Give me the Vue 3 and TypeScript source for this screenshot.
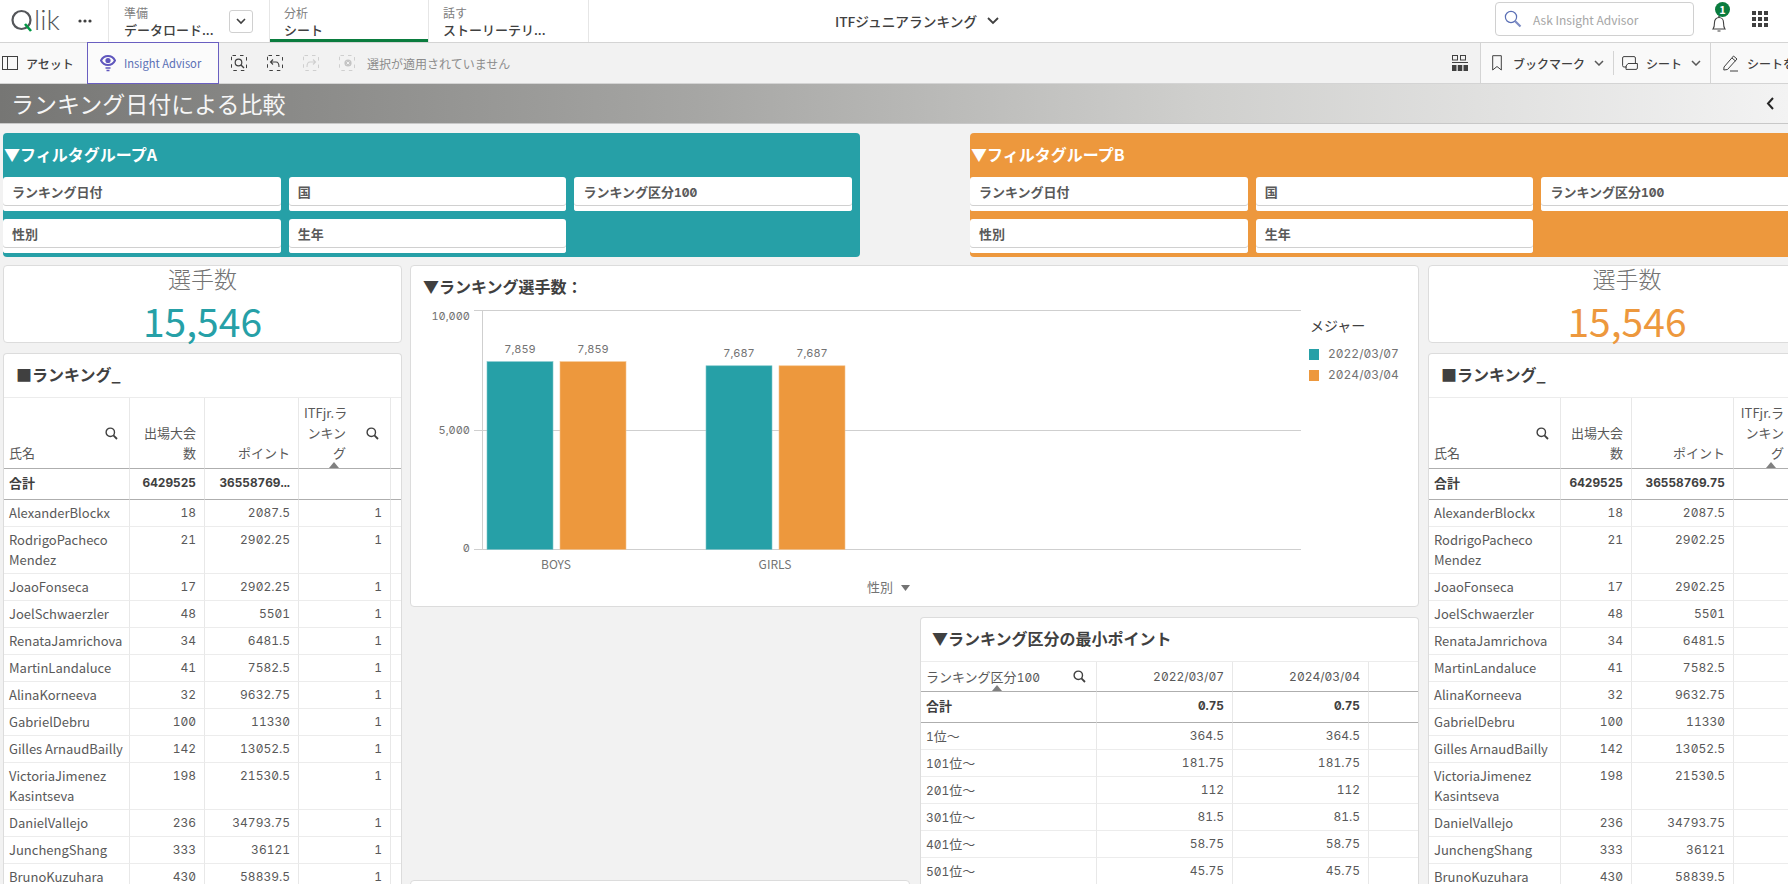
<script setup lang="ts">
interface Row { name: string; nameBreak?: string; events: number; points: string }
const rows: Row[] = [
  { name: 'AlexanderBlockx', events: 18, points: '2087.5' },
  { name: 'RodrigoPacheco', nameBreak: 'Mendez', events: 21, points: '2902.25' },
  { name: 'JoaoFonseca', events: 17, points: '2902.25' },
  { name: 'JoelSchwaerzler', events: 48, points: '5501' },
  { name: 'RenataJamrichova', events: 34, points: '6481.5' },
  { name: 'MartinLandaluce', events: 41, points: '7582.5' },
  { name: 'AlinaKorneeva', events: 32, points: '9632.75' },
  { name: 'GabrielDebru', events: 100, points: '11330' },
  { name: 'Gilles ArnaudBailly', events: 142, points: '13052.5' },
  { name: 'VictoriaJimenez', nameBreak: 'Kasintseva', events: 198, points: '21530.5' },
  { name: 'DanielVallejo', events: 236, points: '34793.75' },
  { name: 'JunchengShang', events: 333, points: '36121' },
  { name: 'BrunoKuzuhara', events: 430, points: '58839.5' },
]
const sides = [
  { key: 'a', color: '#26a0a7', label: 'A', cols: [126, 75, 94, 92, 10], total: '36558769...' },
  { key: 'b', color: '#ed983d', label: 'B', cols: [132, 71, 102, 95, 40], total: '36558769.75' },
]
const filters = [
  { text: 'ランキング日付', num: '' }, { text: '国', num: '' }, { text: 'ランキング区分', num: '100' },
  { text: '性別', num: '' }, { text: '生年', num: '' },
]
const minCols = [176, 136, 136, 49]
const minRows = [
  ['1', '364.5'], ['101', '181.75'], ['201', '112'],
  ['301', '81.5'], ['401', '58.75'], ['501', '45.75'],
]
const sum = (a: number[]) => a.reduce((x, y) => x + y, 0) + 'px'
const yTicks = [
  { label: '10,000', y: 7, line: 0.5 },
  { label: '5,000', y: 121, line: 120.5 },
  { label: '0', y: 239, line: 239.5 },
]
const barH = (v: number) => (239 * v) / 10000
const groups = [
  { name: 'BOYS', value: 7859, label: '7,859', x: 76, cx: 145 },
  { name: 'GIRLS', value: 7687, label: '7,687', x: 295, cx: 364 },
]
</script>

<template>
  <div class="app">
    <header class="topbar">
      <div class="top-left">
        <div class="logo-cell">
          <svg class="logo" width="54" height="36" viewBox="0 -5 54 36">
            <circle cx="11.5" cy="12" r="9" fill="none" stroke="#54565a" stroke-width="2.2" />
            <path d="M15 16 L21 23" stroke="#009845" stroke-width="2.6" fill="none" />
            <text x="24" y="21.5" class="logo-text">lik</text>
          </svg>
          <svg class="dots" width="14" height="4" viewBox="0 0 14 4">
            <circle cx="2" cy="2" r="1.6" fill="#404040" /><circle cx="7" cy="2" r="1.6" fill="#404040" /><circle cx="12" cy="2" r="1.6" fill="#404040" />
          </svg>
        </div>
        <div class="tab tab-prep">
          <div class="tab-text"><span class="tab-small">準備</span><span class="tab-main">データロード...</span></div>
          <button class="tab-btn">
            <svg width="10" height="7" viewBox="0 0 10 7"><path d="M1 1 L5 5 L9 1" fill="none" stroke="#404040" stroke-width="1.6" /></svg>
          </button>
        </div>
        <div class="tab tab-active">
          <div class="tab-text"><span class="tab-small">分析</span><span class="tab-main">シート</span></div>
        </div>
        <div class="tab">
          <div class="tab-text"><span class="tab-small">話す</span><span class="tab-main">ストーリーテリ...</span></div>
        </div>
      </div>
      <div class="app-title">
        <span>ITFジュニアランキング</span>
        <svg width="12" height="8" viewBox="0 0 12 8"><path d="M1 1 L6 6 L11 1" fill="none" stroke="#404040" stroke-width="1.8" /></svg>
      </div>
      <div class="top-right">
        <div class="ask">
          <svg width="18" height="18" viewBox="0 0 18 18">
            <circle cx="7" cy="7" r="5.6" fill="none" stroke="#5a6fb5" stroke-width="1.2" />
            <path d="M11.2 11.2 L16.5 16.5" stroke="#7d8cc4" stroke-width="2.2" />
          </svg>
          <span>Ask Insight Advisor</span>
        </div>
        <div class="bell">
          <svg width="16" height="18" viewBox="0 0 16 18">
            <path d="M2 14 C3.5 12 3.5 10 3.5 7.5 C3.5 4.5 5.5 2.5 8 2.5 C10.5 2.5 12.5 4.5 12.5 7.5 C12.5 10 12.5 12 14 14 Z" fill="none" stroke="#404040" stroke-width="1.1" />
            <path d="M6.5 15.5 H9.5 V16.5 H6.5 Z M7.3 1 H8.7 V2.5 H7.3 Z" fill="#404040" />
          </svg>
          <span class="badge">1</span>
        </div>
        <svg class="apps" width="16" height="16" viewBox="0 0 16 16" fill="#404040">
          <rect x="0" y="0" width="4" height="4" /><rect x="6" y="0" width="4" height="4" /><rect x="12" y="0" width="4" height="4" />
          <rect x="0" y="6" width="4" height="4" /><rect x="6" y="6" width="4" height="4" /><rect x="12" y="6" width="4" height="4" />
          <rect x="0" y="12" width="4" height="4" /><rect x="6" y="12" width="4" height="4" /><rect x="12" y="12" width="4" height="4" />
        </svg>
      </div>
    </header>

    <div class="toolbar">
      <div class="tool-left">
        <div class="assets">
          <svg width="16" height="14" viewBox="0 0 16 14"><rect x="0.5" y="0.5" width="15" height="13" fill="none" stroke="#404040" /><path d="M5.5 0.5 V13.5" stroke="#404040" /></svg>
          <span>アセット</span>
        </div>
        <div class="insight">
          <svg width="16" height="18" viewBox="0 0 16 18">
            <path d="M1 6.5 C4 0.5 12 0.5 15 6.5 C12 12.5 4 12.5 1 6.5 Z" fill="none" stroke="#5f56bd" stroke-width="2" />
            <circle cx="8" cy="6.5" r="2.6" fill="#5f56bd" />
            <path d="M5.5 14 H10.5 M6.5 16.5 H9.5" stroke="#5f56bd" stroke-width="1.6" />
          </svg>
          <span>Insight Advisor</span>
        </div>
        <div class="selections">
          <svg width="16" height="16" viewBox="0 0 16 16"><rect x="0.5" y="0.5" width="15" height="15" rx="1" fill="none" stroke="#404040" stroke-dasharray="3.5 4" /><circle cx="7.5" cy="7.5" r="3.3" fill="none" stroke="#404040" stroke-width="1.2" /><path d="M10 10 L13 13" stroke="#404040" stroke-width="1.4" /></svg>
          <svg width="16" height="16" viewBox="0 0 16 16"><rect x="0.5" y="0.5" width="15" height="15" rx="1" fill="none" stroke="#404040" stroke-dasharray="3.5 4" /><path d="M3.5 7 H9 C11 7 12 8.5 12 12 M6 4.5 L3.5 7 L6 9.5" fill="none" stroke="#404040" stroke-width="1.1" /></svg>
          <svg width="16" height="16" viewBox="0 0 16 16"><rect x="0.5" y="0.5" width="15" height="15" rx="1" fill="none" stroke="#cfcfcf" stroke-dasharray="3.5 4" /><path d="M12.5 7 H7 C5 7 4 8.5 4 12 M10 4.5 L12.5 7 L10 9.5" fill="none" stroke="#cfcfcf" stroke-width="1.1" /></svg>
          <svg width="16" height="16" viewBox="0 0 16 16"><rect x="0.5" y="0.5" width="15" height="15" rx="1" fill="none" stroke="#cfcfcf" stroke-dasharray="3.5 4" /><circle cx="9" cy="8" r="3.6" fill="#c4c4c4" /><path d="M7.6 6.6 L10.4 9.4 M10.4 6.6 L7.6 9.4" stroke="#f2f2f2" stroke-width="1" /></svg>
          <span>選択が適用されていません</span>
        </div>
        <svg class="grid-toggle" width="16" height="16" viewBox="0 0 16 16" fill="#404040">
          <rect x="0.5" y="0.5" width="5" height="4.5" fill="none" stroke="#404040" /><rect x="8.5" y="0.5" width="5" height="4.5" fill="none" stroke="#404040" />
          <rect x="0" y="7" width="16" height="1" />
          <rect x="0" y="10" width="4.5" height="6" /><rect x="5.75" y="10" width="4.5" height="6" /><rect x="11.5" y="10" width="4.5" height="6" />
        </svg>
      </div>
      <div class="tool-right">
        <div class="tool-item tool-bookmark">
          <svg width="10" height="16" viewBox="0 0 10 16"><path d="M0.7 0.7 H9.3 V15 L5 11.5 L0.7 15 Z" fill="none" stroke="#404040" stroke-width="1" /></svg>
          <span class="tool-label">ブックマーク</span>
          <svg width="10" height="6" viewBox="0 0 10 6"><path d="M1 1 L5 5 L9 1" fill="none" stroke="#595959" stroke-width="1.5" /></svg>
        </div>
        <div class="tool-item tool-sheet">
          <svg width="16" height="14" viewBox="0 0 16 14"><path d="M5 11 H2 Q0.6 11 0.6 9.6 V2 Q0.6 0.6 2 0.6 H12 Q13.4 0.6 13.4 2 V7.5 M4 13.4 Q2.8 10 6 7.5 H15.4 V12 Q15.4 13.4 14 13.4 Z" fill="none" stroke="#404040" stroke-width="1" /></svg>
          <span class="tool-label">シート</span>
          <svg width="10" height="6" viewBox="0 0 10 6"><path d="M1 1 L5 5 L9 1" fill="none" stroke="#595959" stroke-width="1.5" /></svg>
        </div>
        <div class="tool-item tool-edit">
          <svg width="16" height="18" viewBox="0 0 16 18"><path d="M1 13 L10.5 2 L14 5 L4.5 15.5 L0.8 16 Z M9 4 L12.5 7" fill="none" stroke="#404040" stroke-width="1" /><path d="M7 17 H15" stroke="#404040" stroke-width="1" /></svg>
          <span class="tool-label">シートを編集</span>
        </div>
      </div>
    </div>

    <div class="title-band">
      <h1>ランキング日付による比較</h1>
      <svg width="9" height="13" viewBox="0 0 9 13"><path d="M7 1 L2 6.5 L7 12" fill="none" stroke="#262626" stroke-width="2" /></svg>
    </div>

    <main class="sheet">
      <template v-for="s in sides" :key="s.key">
        <section :class="['filter-panel', 'filter-' + s.key]" :style="{ background: s.color }">
          <h2>▼フィルタグループ{{ s.label }}</h2>
          <div class="filter-grid">
            <div v-for="f in filters" :key="f.text" class="filter-box">{{ f.text }}<span v-if="f.num" class="num">{{ f.num }}</span></div>
          </div>
        </section>

        <section :class="['card', 'kpi', 'kpi-' + s.key]">
          <div class="kpi-title">選手数</div>
          <div class="kpi-value" :style="{ color: s.color }">15,546</div>
        </section>

        <section :class="['card', 'rank', 'rank-' + s.key]">
          <h3 class="card-title">■ランキング_</h3>
          <table class="tbl" :style="{ width: sum(s.cols) }">
            <colgroup><col v-for="(c, i) in s.cols" :key="i" :style="{ width: c + 'px' }" /></colgroup>
            <thead>
              <tr class="rank-head">
                <th class="left">
                  氏名
                  <svg class="search s-name" width="13" height="13" viewBox="0 0 13 13"><circle cx="5.3" cy="5.3" r="4.2" fill="none" stroke="#404040" stroke-width="1.4" /><path d="M8.4 8.4 L12 12" stroke="#404040" stroke-width="1.8" /></svg>
                </th>
                <th>出場大会<br />数</th>
                <th>ポイント</th>
                <th class="rank-col">
                  ITFjr.ラ<br />ンキン<br />グ
                  <svg class="search s-rank" width="13" height="13" viewBox="0 0 13 13"><circle cx="5.3" cy="5.3" r="4.2" fill="none" stroke="#404040" stroke-width="1.4" /><path d="M8.4 8.4 L12 12" stroke="#404040" stroke-width="1.8" /></svg>
                  <span class="sort"></span>
                </th>
                <th></th>
              </tr>
              <tr class="total">
                <td class="left">合計</td>
                <td class="num">6429525</td>
                <td class="num">{{ s.total }}</td>
                <td></td>
                <td></td>
              </tr>
            </thead>
            <tbody>
              <tr v-for="r in rows" :key="r.name">
                <td class="left">{{ r.name }}<template v-if="r.nameBreak"><br />{{ r.nameBreak }}</template></td>
                <td class="num">{{ r.events }}</td>
                <td class="num">{{ r.points }}</td>
                <td class="num">1</td>
                <td></td>
              </tr>
            </tbody>
          </table>
        </section>
      </template>

      <section class="card chart">
        <h3 class="card-title">▼ランキング選手数：</h3>
        <svg class="plot" width="1007" height="290" viewBox="0 0 1007 290">
          <g v-for="t in yTicks" :key="t.label">
            <line x1="63" :y1="t.line" x2="890" :y2="t.line" stroke="#cfcfcf" />
            <text x="59" :y="t.y" class="tick-num" text-anchor="end" dominant-baseline="middle">{{ t.label }}</text>
          </g>
          <line x1="71.5" y1="0" x2="71.5" y2="240" stroke="#cfcfcf" />
          <g v-for="g in groups" :key="g.name">
            <rect :x="g.x" :y="239.5 - barH(g.value)" width="66" :height="barH(g.value)" fill="#26a0a7" stroke="#7cc5ca" stroke-width="0.6" />
            <rect :x="g.x + 73" :y="239.5 - barH(g.value)" width="66" :height="barH(g.value)" fill="#ed983d" stroke="#f5c48e" stroke-width="0.6" />
            <text :x="g.x + 33" :y="239.5 - barH(g.value) - 12" class="tick-num" text-anchor="middle" dominant-baseline="middle">{{ g.label }}</text>
            <text :x="g.x + 106" :y="239.5 - barH(g.value) - 12" class="tick-num" text-anchor="middle" dominant-baseline="middle">{{ g.label }}</text>
            <text :x="g.cx" y="256" class="tick" text-anchor="middle" dominant-baseline="middle">{{ g.name }}</text>
          </g>
          <text x="456" y="278" class="axis-title" dominant-baseline="middle">性別</text>
          <path d="M490 275 H499 L494.5 281 Z" fill="#737373" />
          <text x="899" y="17" class="legend-title" dominant-baseline="middle">メジャー</text>
          <rect x="898" y="39" width="10" height="11" fill="#26a0a7" />
          <text x="917" y="45" class="legend-text" dominant-baseline="middle">2022/03/07</text>
          <rect x="898" y="60" width="10" height="11" fill="#ed983d" />
          <text x="917" y="66" class="legend-text" dominant-baseline="middle">2024/03/04</text>
        </svg>
      </section>

      <section class="card min-card">
        <h3 class="card-title">▼ランキング区分の最小ポイント</h3>
        <table class="tbl" :style="{ width: sum(minCols) }">
          <colgroup><col v-for="(c, i) in minCols" :key="i" :style="{ width: c + 'px' }" /></colgroup>
          <thead>
            <tr class="min-head">
              <th class="left">
                ランキング区分<span class="num">100</span>
                <svg class="search s-min" width="13" height="13" viewBox="0 0 13 13"><circle cx="5.3" cy="5.3" r="4.2" fill="none" stroke="#404040" stroke-width="1.4" /><path d="M8.4 8.4 L12 12" stroke="#404040" stroke-width="1.8" /></svg>
                <span class="sort sort-min"></span>
              </th>
              <th class="num">2022/03/07</th>
              <th class="num">2024/03/04</th>
              <th></th>
            </tr>
            <tr class="total">
              <td class="left">合計</td>
              <td class="num">0.75</td>
              <td class="num">0.75</td>
              <td></td>
            </tr>
          </thead>
          <tbody>
            <tr v-for="m in minRows" :key="m[0]">
              <td class="left"><span class="num">{{ m[0] }}</span>位～</td>
              <td class="num">{{ m[1] }}</td>
              <td class="num">{{ m[1] }}</td>
              <td></td>
            </tr>
          </tbody>
        </table>
      </section>

      <section class="card stub"></section>
    </main>
  </div>
</template>

<style>
html, body { margin: 0; background: #f2f2f2; overflow: hidden; }
</style>

<style scoped>
.app {
  width: 1788px;
  height: 884px;
  overflow: hidden;
  background: #f2f2f2;
  color: #404040;
  font-family: "Noto Sans CJK JP", "Noto Sans", sans-serif;
}
h1, h2, h3 { margin: 0; }

/* top bar */
.topbar {
  display: grid;
  grid-template-columns: 1fr auto 1fr;
  height: 42px;
  background: #fff;
  border-bottom: 1px solid #d4d4d4;
}
.top-left { display: flex; height: 42px; }
.logo-cell {
  width: 109px;
  box-sizing: border-box;
  border-right: 1px solid #e6e6e6;
  display: flex;
  align-items: center;
  padding-left: 10px;
}
.logo { flex: none; }
.logo-text { font-family: Lato, sans-serif; font-size: 28px; font-weight: 300; fill: #54565a; }
.dots { margin-left: 14px; }
.tab {
  width: 160px;
  box-sizing: border-box;
  border-right: 1px solid #e6e6e6;
  padding-left: 14px;
  display: flex;
  align-items: center;
  position: relative;
}
.tab-prep { width: 160px; padding-left: 15px; border-right: none; }
.tab-active { box-shadow: inset 0 -3px 0 #0a7c3e; border-left: 1px solid #e6e6e6; }
.tab-text { display: flex; flex-direction: column; width: 90px; white-space: nowrap; }
.tab-small { font-size: 12px; line-height: 16px; color: #808080; }
.tab-main { font-size: 13px; line-height: 17px; color: #404040; font-weight: 500; }
.tab-btn {
  width: 24px;
  height: 23px;
  margin-left: 15px;
  padding: 0;
  background: #fff;
  border: 1px solid #d0d0d0;
  border-radius: 3px;
  display: flex;
  align-items: center;
  justify-content: center;
}
.app-title {
  display: flex;
  align-items: center;
  gap: 10px;
  margin-left: 46px;
  font-size: 13.7px;
  font-weight: 500;
}
.top-right { display: flex; align-items: center; justify-content: flex-end; padding-right: 20px; }
.ask {
  width: 199px;
  height: 34px;
  box-sizing: border-box;
  border: 1px solid #d0d0d0;
  border-radius: 4px;
  display: flex;
  align-items: center;
  padding-left: 8px;
  gap: 11px;
  font-size: 12px;
  color: #a6a6a6;
  margin-bottom: 4px;
}
.bell { position: relative; width: 16px; height: 18px; margin-left: 17px; margin-top: 4px; }
.badge {
  position: absolute;
  left: 4px;
  top: -12px;
  width: 15px;
  height: 15px;
  border-radius: 50%;
  background: #0a7c3e;
  color: #fff;
  font-size: 11px;
  font-weight: 700;
  line-height: 15px;
  text-align: center;
}
.apps { margin-left: 25px; margin-bottom: 4px; }

/* toolbar */
.toolbar {
  display: flex;
  height: 40px;
  background: #f2f2f2;
  border-bottom: 1px solid #d4d4d4;
}
.tool-left { flex: 1; min-width: 0; display: flex; align-items: center; height: 40px; }
.assets {
  width: 87px;
  height: 40px;
  box-sizing: border-box;
  background: #f9f9f9;
  display: flex;
  align-items: center;
  gap: 8px;
  padding-left: 2px;
  font-size: 12px;
  font-weight: 500;
}
.insight {
  width: 132px;
  height: 42px;
  margin-top: -1px;
  box-sizing: border-box;
  background: #fbfbfb;
  border: 1px solid #6a5fc1;
  display: flex;
  align-items: center;
  padding-left: 12px;
  gap: 8px;
  font-size: 11.2px;
  color: #5a6fb5;
  flex: none;
}
.selections {
  flex: 1;
  display: flex;
  align-items: center;
  gap: 20px;
  padding-left: 12px;
  font-size: 12px;
  color: #8c8c8c;
}
.selections span { margin-left: -8px; }
.grid-toggle { margin-right: 12px; flex: none; }
.tool-right {
  width: 308px;
  flex: none;
  height: 40px;
  box-sizing: border-box;
  display: flex;
  align-items: center;
  overflow: hidden;
  background: #f9f9f9;
  border-left: 1px solid #d4d4d4;
  white-space: nowrap;
}
.tool-item { display: flex; align-items: center; flex: none; height: 40px; }
.tool-label { font-size: 12px; font-weight: 500; }
.tool-bookmark { padding-left: 11px; }
.tool-bookmark .tool-label { margin: 0 9px 0 11px; }
.tool-sheet { margin-left: 9px; padding-left: 9px; position: relative; }
.tool-sheet .tool-label { margin: 0 9px 0 8px; }
.tool-sheet::before {
  content: "";
  position: absolute;
  left: 0;
  top: 8px;
  bottom: 8px;
  width: 1px;
  background: #d4d4d4;
}
.tool-edit { border-left: 1px solid #d4d4d4; margin-left: 9px; padding-left: 12px; }
.tool-edit .tool-label { margin-left: 8px; }

/* title band */
.title-band {
  height: 39px;
  border-bottom: 1px solid #c8c8c8;
  background: linear-gradient(90deg, #767674 0, #a6a6a4 39%, #cfcfcd 67%, #f3f3f3 100%);
  display: flex;
  align-items: center;
  justify-content: space-between;
  padding: 0 13px 0 11px;
}
.title-band h1 { font-size: 23px; font-weight: 400; color: #f6f6f6; line-height: 39px; }

/* sheet */
.sheet {
  display: grid;
  width: 1850px;
  height: 760px;
  box-sizing: border-box;
  padding: 9px 0 0 3px;
  overflow: hidden;
  grid-template-columns: 399px 8px 450px 50px 10px 50px 449px 9px 398px 24px;
  grid-template-rows: 124px 8px 78px 10px 254px 10px 263px 13px;
}
.card {
  background: #fff;
  border: 1px solid #dcdcdc;
  border-radius: 4px;
  box-sizing: border-box;
  min-width: 0;
  min-height: 0;
  overflow: hidden;
}
.card-title {
  height: 43px;
  box-sizing: border-box;
  padding-left: 12px;
  font-size: 16px;
  font-weight: 700;
  line-height: 40px;
  color: #404040;
  white-space: nowrap;
}
.filter-panel { border-radius: 4px; color: #fff; min-width: 0; }
.filter-a { grid-column: 1 / 4; grid-row: 1; }
.filter-b { grid-column: 7 / 11; grid-row: 1; }
.filter-panel h2 { height: 44px; font-size: 16px; font-weight: 700; line-height: 42px; padding-left: 1px; white-space: nowrap; }
.filter-grid {
  display: grid;
  grid-template-columns: repeat(3, 277.7px);
  grid-auto-rows: 34px;
  gap: 8px;
}
.filter-box {
  position: relative;
  background: #fff;
  border-radius: 3px;
  box-sizing: border-box;
  padding-left: 9px;
  font-size: 13px;
  font-weight: 700;
  line-height: 29px;
  color: #595959;
  box-shadow: inset 0 -5px 0 #fff, inset 0 -6px 0 #d0d0d0;
}
.kpi {
  display: flex;
  flex-direction: column;
  align-items: center;
  overflow: visible;
}
.kpi-a { grid-column: 1; grid-row: 3; }
.kpi-b { grid-column: 9; grid-row: 3; }
.kpi-title { font-size: 23px; line-height: 24px; color: #737373; font-weight: 300; }
.kpi-value { font-size: 39px; line-height: 42px; margin-top: 9px; font-weight: 400; }
.rank { border-bottom: none; border-radius: 4px 4px 0 0; }
.rank-a { grid-column: 1; grid-row: 5 / 9; }
.rank-b { grid-column: 9; grid-row: 5 / 9; }
.chart { grid-column: 3 / 8; grid-row: 3 / 6; }
.chart .card-title { height: 44px; }
.chart .plot { display: block; overflow: visible; }
.min-card { grid-column: 6 / 8; grid-row: 7 / 9; border-bottom: none; }
.stub { grid-column: 3 / 5; grid-row: 8; }
.min-card .card-title { padding-left: 11px; }

/* plot text */
.tick { font-size: 12px; fill: #737373; }
.tick-num { font-family: Inter, sans-serif; font-feature-settings: "zero", "tnum"; font-size: 11px; fill: #737373; }
.axis-title { font-size: 13px; fill: #737373; }
.legend-title { font-size: 14px; fill: #404040; }
.legend-text { font-family: Inter, sans-serif; font-feature-settings: "zero", "tnum"; font-size: 12px; fill: #737373; }

/* tables */
.tbl {
  table-layout: fixed;
  border-collapse: separate;
  border-spacing: 0;
  font-size: 13px;
  line-height: 20px;
  color: #595959;
  border-top: 1px solid #ececec;
}
.tbl th, .tbl td {
  box-sizing: border-box;
  padding: 3px 8px 3px 5px;
  text-align: right;
  vertical-align: top;
  border-right: 1px solid #e8e8e8;
  border-bottom: 1px solid #ececec;
  font-weight: 400;
  white-space: nowrap;
}
.tbl th:last-child, .tbl td:last-child { border-right: none; }
.tbl .left { text-align: left; }
.tbl th { position: relative; vertical-align: bottom; padding-bottom: 5px; border-bottom-color: #aeaeae; }
.rank-head th { height: 71px; }
.min-head th { height: 30px; vertical-align: middle; padding-top: 2px; padding-bottom: 2px; }
.tbl .total td {
  height: 31px;
  vertical-align: middle;
  font-weight: 700;
  color: #404040;
  border-bottom-color: #aeaeae;
  padding-top: 1px;
  padding-bottom: 3px;
}
.tbl tbody td { height: 27px; }
.tbl .rank-col { padding-right: 44px; }
.num { font-family: Inter, sans-serif; font-feature-settings: "zero", "tnum"; font-size: 12px; line-height: 1; }
.tbl td.num, .tbl th.num { line-height: 20px; }
.tbl .total .num { font-size: 11.8px; padding-left: 3px; }
.search { position: absolute; }
.s-name { right: 11px; top: 29px; }
.s-rank { right: 11px; top: 29px; }
.s-min { right: 10px; top: 8px; }
.sort {
  position: absolute;
  left: 30px;
  bottom: 0;
  width: 0;
  height: 0;
  border-left: 5px solid transparent;
  border-right: 5px solid transparent;
  border-bottom: 6px solid #808080;
}
.rank-b .sort { left: 32px; }
.sort-min { left: 71px; }
</style>
